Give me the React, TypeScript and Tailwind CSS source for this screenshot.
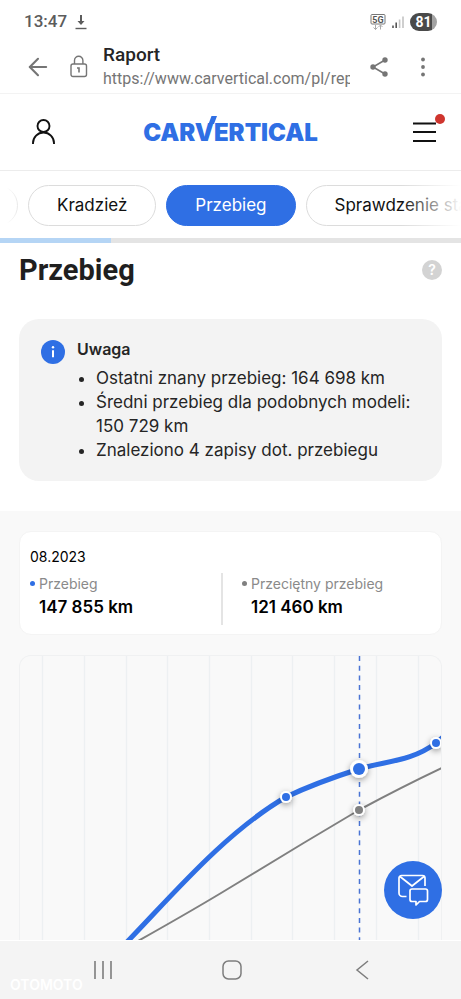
import { ArrowLeft } from 'lucide-react';

const TABS = [
  { id: 'kradziez', label: 'Kradzież' },
  { id: 'przebieg', label: 'Przebieg' },
  { id: 'stan', label: 'Sprawdzenie stanu' },
];

const NOTES = [
  'Ostatni znany przebieg: 164 698 km',
  'Średni przebieg dla podobnych modeli: 150 729 km',
  'Znaleziono 4 zapisy dot. przebiegu',
];

const GRID_LINES = [23, 65, 107, 148, 190, 232, 273, 315, 357, 399];

function StatusBar() {
  return (
    <div className="flex h-11 items-center justify-between px-6 font-['Roboto',sans-serif]">
      <div className="flex items-center gap-2">
        <span className="text-[17px] font-medium text-[#5c5c5c]">13:47</span>
        <svg className="h-4 w-3" viewBox="0 0 12 16" fill="none" stroke="#5c5c5c">
          <path d="M6 1v9" strokeWidth="2" />
          <path d="M2.5 7h7L6 11z" fill="#5c5c5c" stroke="none" />
          <path d="M.5 14.5h11" strokeWidth="1.4" />
        </svg>
      </div>
      <div className="flex items-center gap-1.5">
        <svg className="h-4 w-4" viewBox="0 0 16 16" fill="none">
          <rect x="1" y=".5" width="14" height="9.5" rx="1" stroke="#777" />
          <text x="8" y="8.5" textAnchor="middle" fontSize="9" fontWeight="700" fill="#555">5G</text>
          <path d="M5.5 11v4.500m-2-2l2 2 2-2M10.500 15.500V11m-2 2l2-2 2 2" stroke="#aaa" />
        </svg>
        <svg className="h-4 w-3" viewBox="0 0 12 16" fill="none" strokeWidth="1.6">
          <path d="M1 14v-2.500M4.200 14V8.500" stroke="#555" />
          <path d="M7.600 14V5.500M11 14V2.500" stroke="#c4c4c4" />
        </svg>
        <span className="flex h-[18px] w-[27px] items-center justify-center rounded-full bg-linear-to-r from-[#4a4a4a] from-80% to-[#a3a3a3] to-80% text-sm font-bold text-white">
          81
        </span>
      </div>
    </div>
  );
}

function BrowserBar() {
  return (
    <div className="flex h-[50px] items-center border-b border-[#f3f3f3] px-6 pb-1 font-['Roboto',sans-serif] text-[#757575]">
      <button type="button" aria-label="Wstecz" className="w-7">
        <ArrowLeft className="h-7 w-7" strokeWidth={1.8} />
      </button>
      <svg className="ml-[18px] h-6 w-[18px] shrink-0" viewBox="0 0 18 24" fill="none" stroke="currentColor" strokeWidth="1.4">
        <rect x="1" y="9" width="15.500" height="12.500" rx="2" />
        <path d="M4.500 9V5.500a4.200 4.200 0 0 1 8.400 0V9" />
        <path d="M7 13h2v4.500" strokeWidth="1.6" />
      </svg>
      <div className="ml-[15px] w-[247px] min-w-0">
        <p className="text-[19px] leading-6 font-medium text-[#252525]">Raport</p>
        <p className="overflow-hidden text-base leading-6 whitespace-nowrap">https://www.carvertical.com/pl/rep</p>
      </div>
      <div className="ml-auto flex items-center gap-5">
        <button type="button" aria-label="Udostępnij">
          <svg className="h-5 w-5" viewBox="0 0 20 20" fill="currentColor">
            <path d="M16 3L4 10l12 7" fill="none" stroke="currentColor" strokeWidth="1.6" />
            <circle cx="16" cy="3" r="2.7" />
            <circle cx="4" cy="10" r="2.7" />
            <circle cx="16" cy="17" r="2.7" />
          </svg>
        </button>
        <button type="button" aria-label="Więcej">
          <svg className="h-5 w-7" viewBox="0 0 28 20" fill="currentColor">
            <circle cx="14" cy="2.5" r="1.9" />
            <circle cx="14" cy="10" r="1.9" />
            <circle cx="14" cy="17.5" r="1.9" />
          </svg>
        </button>
      </div>
    </div>
  );
}

function SiteHeader() {
  return (
    <header className="grid h-[77px] grid-cols-[1fr_auto_1fr] items-center border-b border-[#ececec] px-4">
      <button type="button" aria-label="Konto" className="w-11 pl-3">
        <svg className="h-8 w-8" viewBox="0 0 32 32" fill="none" stroke="#111" strokeWidth="1.9">
          <circle cx="15.500" cy="10" r="6" />
          <path d="M5 28v-1a10.500 10.500 0 0 1 21 0v1" />
        </svg>
      </button>
      <a href="#" className="pt-0.5 text-2xl leading-8 font-black text-[#2f6fe4]">
        CAR
        <span className="relative">
          V
          <svg className="absolute -top-0.5 -right-1 h-2 w-2.5" viewBox="0 0 10 8" fill="currentColor">
            <path d="M0.500 8L3.500 0H9L6 8z" />
          </svg>
        </span>
        ERTICAL
      </a>
      <button type="button" aria-label="Menu" className="relative h-8 w-8 justify-self-end">
        <svg className="h-8 w-8" viewBox="0 0 32 32" stroke="#111" strokeWidth="2">
          <path d="M0 7.500h23M0 16h23M0 25h23" />
        </svg>
        <span className="absolute -top-0.5 right-0 h-2.5 w-2.5 rounded-full bg-[#cf352e]" />
      </button>
    </header>
  );
}

function TabBar() {
  return (
    <nav>
      <div className="relative flex h-[67px] items-center gap-2.5 overflow-hidden pt-0.5">
        <button type="button" aria-label="Poprzednia sekcja" className="-ml-[47px] h-[41px] w-[65px] shrink-0 rounded-full border border-[#dcdcdc]" />
        {TABS.map(tab => (
          <button
            key={tab.id}
            type="button"
            className={`h-[41px] shrink-0 rounded-full border px-7 text-[17px] whitespace-nowrap ${
              tab.id === 'przebieg' ? 'border-[#2f6fe4] bg-[#2f6fe4] text-white' : 'border-[#dcdcdc] text-[#111]'
            }`}
          >
            {tab.label}
          </button>
        ))}
        <div className="pointer-events-none absolute inset-y-0 left-0 w-6 bg-linear-to-r from-white from-30% to-transparent" />
        <div className="pointer-events-none absolute inset-y-0 right-0 w-[60px] bg-linear-to-l from-white to-transparent" />
      </div>
      <div className="h-[5px] bg-[#e4e4e4]">
        <div className="h-full w-[24%] bg-[#b5d5f5]" />
      </div>
    </nav>
  );
}

function Notice() {
  return (
    <section className="mx-[19px] mb-[30px] flex gap-3 rounded-[20px] bg-[#f3f3f3] pt-[18px] pr-6 pb-[19px] pl-[22px] text-[#252525]">
      <svg className="mt-[3px] h-6 w-6 shrink-0" viewBox="0 0 24 24">
        <circle cx="12" cy="12" r="12" fill="#2f6fe4" />
        <path d="M12 10.300v7" stroke="#fff" strokeWidth="2" />
        <circle cx="12" cy="7.300" r="1.200" fill="#fff" />
      </svg>
      <div>
        <h2 className="mb-[5px] text-base leading-6 font-semibold">Uwaga</h2>
        <ul className="list-disc pl-[19px] text-[17px] leading-6">
          {NOTES.map(note => (
            <li key={note}>{note}</li>
          ))}
        </ul>
      </div>
    </section>
  );
}

function Reading({ label, value, dot }: { label: string; value: string; dot: string }) {
  return (
    <div className="flex gap-1">
      <span className={`mt-2 h-[5px] w-[5px] rounded-full ${dot}`} />
      <div>
        <p className="text-sm leading-[22px] text-[#8a8a8a]">{label}</p>
        <p className="text-[17px] leading-6 font-semibold text-black">{value}</p>
      </div>
    </div>
  );
}

function MileageChart() {
  return (
    <div className="relative mt-5 overflow-hidden rounded-t-xl border border-b-0 border-[#f0f1f2]">
      <svg className="block w-full" viewBox="0 0 421 284" fill="none">
        <defs>
          <filter id="pointShadow" x="-20%" y="-80%" width="140%" height="260%">
            <feDropShadow dx="0" dy="2" stdDeviation="3" floodColor="#000" floodOpacity=".4" />
          </filter>
        </defs>
        {GRID_LINES.map(x => (
          <path key={x} d={`M${x - 0.5} 0V284`} stroke="#edf0f2" strokeWidth="1.4" />
        ))}
        <path d="M118 285C150 267 180 250 211 231S300 177 339 154Q384 130 422 112" stroke="#808080" strokeWidth="2" />
        <path d="M106 287C149 243 204 177 266 141C289 130 314 121 339 113S391 106 416 87L423 81" stroke="#2f6fe4" strokeWidth="5" />
        <path d="M339.5 0V284" stroke="#4a74d4" strokeWidth="1.5" strokeDasharray="5 4.7" />
        <g filter="url(#pointShadow)">
          <circle cx="266" cy="141" r="6" fill="#fff" />
          <circle cx="339" cy="113" r="9" fill="#fff" />
          <circle cx="339" cy="154" r="6" fill="#fff" />
          <circle cx="416" cy="87" r="6" fill="#fff" />
        </g>
        <circle cx="266" cy="141" r="4" fill="#2f6fe4" />
        <circle cx="339" cy="113" r="6" fill="#2f6fe4" />
        <circle cx="339" cy="154" r="4" fill="#808080" />
        <circle cx="416" cy="87" r="4" fill="#2f6fe4" />
      </svg>
    </div>
  );
}

function SystemNav() {
  return (
    <div className="relative grid h-[59px] grid-cols-3 place-items-center border-t border-white bg-[#f4f4f4] pl-[38px] pr-[34px] text-[#7d7d7d]">
      <button type="button" aria-label="Ostatnie">
        <svg className="h-5 w-5" viewBox="0 0 20 20" stroke="currentColor" strokeWidth="1.6">
          <path d="M2 1v18M10 1v18M18 1v18" />
        </svg>
      </button>
      <button type="button" aria-label="Ekran główny">
        <svg className="h-5 w-5" viewBox="0 0 20 20" fill="none" stroke="currentColor" strokeWidth="1.5">
          <rect x="1" y="1" width="18" height="18" rx="5.5" />
        </svg>
      </button>
      <button type="button" aria-label="Cofnij">
        <svg className="h-5 w-5" viewBox="0 0 20 20" fill="none" stroke="currentColor" strokeWidth="1.5">
          <path d="M16 1L5 10l11 9" />
        </svg>
      </button>
      <span className="absolute bottom-1 left-2.5 text-sm font-semibold text-white">OTOMOTO</span>
    </div>
  );
}

export default function App() {
  return (
    <div className="flex min-h-screen flex-col bg-white font-['Inter',sans-serif]">
      <StatusBar />
      <BrowserBar />
      <SiteHeader />
      <TabBar />

      <main className="flex-1 bg-[#f9f9f9]">
        <div className="overflow-hidden bg-white">
          <div className="mx-[19px] flex h-[76px] items-start justify-between pt-[9px]">
            <h1 className="font-['Roboto',sans-serif] text-[29px] leading-9 font-bold text-[#1f1f1f]">Przebieg</h1>
            <button type="button" aria-label="Pomoc" className="mt-2 h-5 w-5 rounded-full bg-[#d3d3d3] text-sm leading-5 font-semibold text-white">
              ?
            </button>
          </div>
          <Notice />
        </div>

        <section className="relative px-[19px] pt-5">
          <div className="rounded-xl border border-[#f4f4f4] bg-white px-2.5 pt-[13px] pb-[9px]">
            <p className="text-sm leading-6">08.2023</p>
            <div className="mt-1 grid grid-cols-[191px_1fr]">
              <Reading label="Przebieg" value="147 855 km" dot="bg-[#2f6fe4]" />
              <div className="border-l-2 border-[#e4e4e4] pb-1.5 pl-[19px]">
                <Reading label="Przeciętny przebieg" value="121 460 km" dot="bg-[#808080]" />
              </div>
            </div>
          </div>
          <MileageChart />
          <button type="button" aria-label="Napisz do nas" className="absolute right-[19px] bottom-[21px] flex h-[58px] w-[58px] items-center justify-center rounded-full bg-[#2f6fe4]">
            <svg className="h-8 w-8" viewBox="0 0 32 32" fill="none" stroke="#fff" strokeWidth="1.7" strokeLinejoin="round">
              <path d="M9.500 22.500H5.500a3.500 3.500 0 0 1-3.500-3.500V4a2.500 2.500 0 0 1 2.500-2.500h21A2.500 2.500 0 0 1 28 4v8" />
              <path d="M3 2.500L15 12 27 2.500" />
              <path d="M15 15h13.500a2 2 0 0 1 2 2v8.500a2 2 0 0 1-2 2H22.500L19 31v-3.500h-4a2 2 0 0 1-2-2V17a2 2 0 0 1 2-2z" />
            </svg>
          </button>
        </section>
      </main>

      <SystemNav />
    </div>
  );
}
